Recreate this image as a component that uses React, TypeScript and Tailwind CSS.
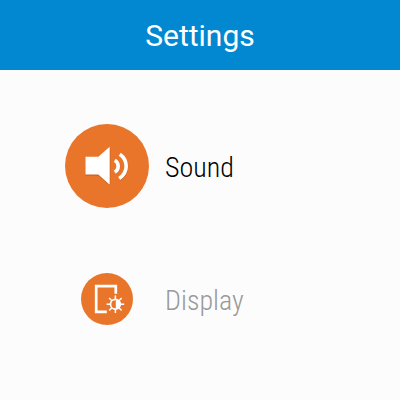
const items = [
  { label: "Sound", href: "#sound", icon: <SoundIcon />, active: true },
  { label: "Display", href: "#display", icon: <DisplayIcon />, active: false },
];

const rays = [0, 45, 90, 135, 180, 225, 270, 315];

function SoundIcon() {
  return (
    <svg viewBox="0 0 84 84" className="size-[84px]" aria-hidden="true">
      <circle cx="42" cy="42" r="42" fill="#e8752a" />
      <path d="M20.5 33.2H33.3L45.3 23.7V62L33.3 51.8H20.5Z" fill="#b9561a" opacity="0.6" />
      <path d="M20.5 32.7H33.3L44.7 22.7V60.7L33.3 50.5H20.5Z" fill="#fff" />
      <g fill="none" stroke="#b9561a" strokeWidth="3.6" opacity="0.4" transform="translate(0.4 0.9)">
        <path d="M49.8 36.2Q53.2 38.4 53.2 42.2T49.8 48.2" />
        <path d="M54.8 30.2Q61.2 34.8 61.2 42.2T54.2 54.4" />
      </g>
      <g fill="none" stroke="#fff" strokeWidth="3.6">
        <path d="M49.8 36.2Q53.2 38.4 53.2 42.2T49.8 48.2" />
        <path d="M54.8 30.2Q61.2 34.8 61.2 42.2T54.2 54.4" />
      </g>
    </svg>
  );
}

function DisplayIcon() {
  return (
    <svg viewBox="0 0 52 52" className="size-[52px]" aria-hidden="true">
      <circle cx="26" cy="26" r="26" fill="#e8752a" />
      <path d="M34.8 20.8V13.2H15.2V38.9H25.8" fill="none" stroke="#fff" strokeWidth="2.7" />
      <g transform="translate(34.4 31.2)">
        <circle r="4.9" fill="none" stroke="#fff" strokeWidth="1.7" />
        <path d="M0.4 -4.9A4.9 4.9 0 0 1 0.4 4.9Z" fill="#fff" />
        {rays.map((angle) => (
          <path key={angle} d="M0 -5V-8.8" stroke="#fff" strokeWidth="1.5" transform={`rotate(${angle})`} />
        ))}
      </g>
    </svg>
  );
}

export default function App() {
  return (
    <div className="min-h-screen bg-[#fcfcfc]">
      <header className="flex h-[70px] items-center justify-center bg-[#0288d1]">
        <h1 className="pt-0.5 font-['Roboto',sans-serif] text-[30px] leading-9 text-white">Settings</h1>
      </header>
      <nav className="flex flex-col gap-[49px] px-16 pt-[54px]">
        {items.map((item) => (
          <a key={item.label} href={item.href} className="flex h-[84px] items-center gap-4 no-underline">
            <span className="flex w-[85px] justify-center">{item.icon}</span>
            <span
              className={`pt-1 font-['Roboto_Condensed','Roboto',sans-serif] text-[28px] font-light leading-9 ${
                item.active ? "text-black" : "text-[#999999]"
              }`}
            >
              {item.label}
            </span>
          </a>
        ))}
      </nav>
    </div>
  );
}
